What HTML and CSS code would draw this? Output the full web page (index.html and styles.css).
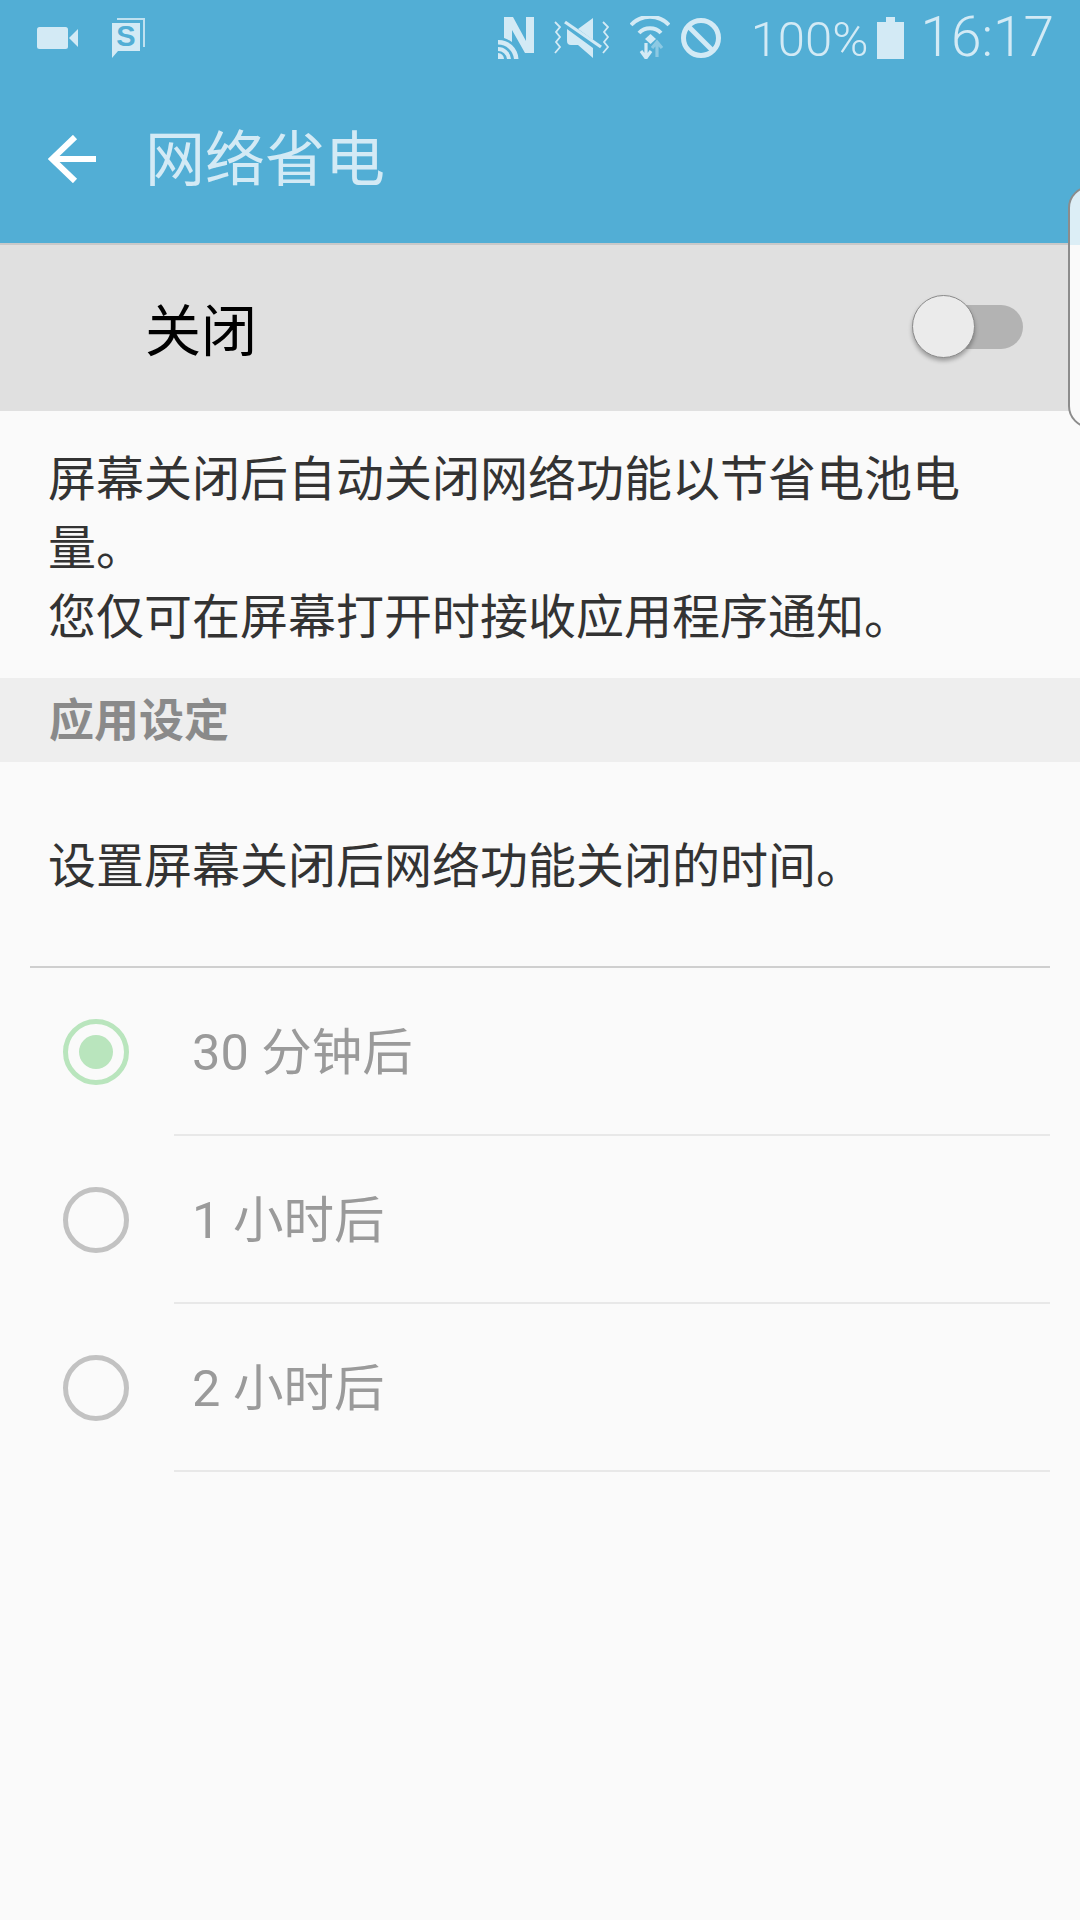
FILE: index.html
```html
<!DOCTYPE html>
<html lang="zh-CN">
<head>
    <meta charset="UTF-8">
    <meta name="viewport" content="width=device-width, initial-scale=1.0">
    <title>网络省电</title>
    <link rel="stylesheet" href="styles.css">
</head>
<body>
    <div class="screen">
        <header class="header">
            <div class="status">
                <div class="status-left">
                    <svg class="ic-video" viewBox="0 0 41 22"><rect x="0" y="0" width="31" height="22" rx="2.5"/><path d="M32 11 L41 2 V20 Z"/></svg>
                    <svg class="ic-s" viewBox="0 0 33 40">
                        <path d="M5 0 H33 V29 H31 V2 H5 Z" opacity=".85"/>
                        <path d="M0 5 H28 V33 H6 L0 40 Z"/>
                        <text x="14" y="28" class="ic-s-letter">S</text>
                    </svg>
                </div>
                <div class="status-right">
                    <svg class="ic-nfc" viewBox="0 0 36 42">
                        <path d="M6 0 H15 L28 24 V0 H36 V36 H27 L14 13 V25 A25 25 0 0 0 6 21 Z"/>
                        <path d="M0 23 A20 20 0 0 1 20.500 42 H16 A16 16 0 0 0 0 27.500 Z M0 30 A13 13 0 0 1 13 42 H9 A9 9 0 0 0 0 34 Z M0 36 A6 6 0 0 1 6 42 H0 Z"/>
                    </svg>
                    <svg class="ic-mute" viewBox="0 0 56 40">
                        <path d="M1 4 L6 9 L2 14 L6 19 L2 24 L6 29 L1 35 M49 4 L54 9 L50 14 L54 19 L50 24 L54 29 L49 35" class="line-thin"/>
                        <path d="M39 0 V22 L24 11 Z M13 11 L39 30 V40 L24 27 H17 Q13 27 13 23 Z"/>
                        <path d="M11 4 L47 29" class="line-mid"/>
                    </svg>
                    <svg class="ic-wifi" viewBox="0 0 40 43">
                        <path d="M1 9 A26 26 0 0 1 39 9" class="line-wide"/>
                        <path d="M9 17 A15 15 0 0 1 31 17" class="line-wide"/>
                        <path d="M15 23 L20.500 18 L26 23 L20.500 28 Z"/>
                        <path d="M16 27 V39 M11 35 L16 42 L21 35" class="line-mid"/>
                        <path d="M27 41 V27 M22 32 L27 26 L32 32" class="line-mid faded"/>
                    </svg>
                    <svg class="ic-block" viewBox="0 0 40 40"><circle cx="20" cy="20" r="17.500" class="line-bold"/><path d="M7 8 L32 33" class="line-bold"/></svg>
                    <span class="pct">100%</span>
                    <svg class="ic-batt" viewBox="0 0 27 42"><path d="M9 0 H18 V5 H27 V42 H0 V5 H9 Z"/></svg>
                    <span class="clock">16:17</span>
                </div>
            </div>
            <div class="toolbar">
                <svg class="ic-back" viewBox="0 0 48 48"><path d="M48 24 H4 M27 2 L4 24 L27 46"/></svg>
                <h1 class="title">网络省电</h1>
            </div>
        </header>

        <div class="switch-bar">
            <span class="switch-label">关闭</span>
            <div class="switch">
                <div class="switch-track"></div>
                <div class="switch-knob"></div>
            </div>
        </div>

        <p class="desc">屏幕关闭后自动关闭网络功能以节省电池电量。<br>您仅可在屏幕打开时接收应用程序通知。</p>

        <div class="section">应用设定</div>

        <p class="hint">设置屏幕关闭后网络功能关闭的时间。</p>

        <div class="options">
            <div class="option">
                <span class="radio checked"></span>
                <div class="option-text">30 分钟后</div>
            </div>
            <div class="option">
                <span class="radio"></span>
                <div class="option-text">1 小时后</div>
            </div>
            <div class="option">
                <span class="radio"></span>
                <div class="option-text">2 小时后</div>
            </div>
        </div>

        <div class="edge-handle"></div>
    </div>
</body>
</html>
```

FILE: styles.css
```css
* {
    box-sizing: border-box;
}
html, body {
    margin: 0;
    padding: 0;
}
body {
    font-family: Roboto, "Noto Sans CJK SC", sans-serif;
    background: #fafafa;
}
.screen {
    position: relative;
    width: 1080px;
    height: 1920px;
    overflow: hidden;
    background: #fafafa;
}

/* header */
.header {
    height: 243px;
    background: #52aed5;
    color: #d3eaf5;
}
.status {
    height: 75px;
    display: flex;
    justify-content: space-between;
    align-items: center;
    padding: 0 26px 0 37px;
}
.status svg {
    fill: #d3eaf5;
    display: block;
}
.status-left {
    display: flex;
    align-items: center;
    gap: 34px;
}
.status-right {
    display: flex;
    align-items: center;
}
.ic-video {
    width: 41px;
    height: 22px;
}
.ic-s {
    width: 33px;
    height: 40px;
}
.ic-s-letter {
    fill: #52aed5;
    font-family: "Liberation Sans", sans-serif;
    font-weight: bold;
    font-size: 29px;
    text-anchor: middle;
}
.ic-nfc {
    width: 36px;
    height: 42px;
}
.ic-mute {
    width: 56px;
    height: 40px;
    margin-left: 20px;
}
.ic-wifi {
    width: 40px;
    height: 43px;
    margin-left: 20px;
}
.ic-block {
    width: 40px;
    height: 40px;
    margin-left: 11px;
}
.status .line-thin, .status .line-mid, .status .line-wide, .status .line-bold {
    fill: none;
    stroke: #d3eaf5;
}
.status .line-thin {
    stroke-width: 1.8;
}
.status .line-mid {
    stroke-width: 3.2;
}
.status .line-wide {
    stroke-width: 4;
}
.status .line-bold {
    stroke-width: 5;
}
.status .faded {
    opacity: .45;
}
.pct {
    margin-left: 30px;
    margin-top: 3px;
    font-size: 49px;
    font-weight: 300;
    line-height: 75px;
}
.ic-batt {
    width: 27px;
    height: 42px;
    margin-left: 9px;
}
.clock {
    margin-left: 16px;
    font-size: 55px;
    font-weight: 300;
    line-height: 75px;
}
.toolbar {
    height: 168px;
    display: flex;
    align-items: center;
    padding-left: 48px;
}
.ic-back {
    width: 48px;
    height: 48px;
}
.ic-back path {
    fill: none;
    stroke: #fff;
    stroke-width: 6;
}
.title {
    margin: 4px 0 0 49px;
    font-size: 60px;
    font-weight: 400;
    line-height: 80px;
}

/* master switch */
.switch-bar {
    height: 168px;
    background: #e0e0e0;
    border-top: 2px solid #c9c9c9;
    display: flex;
    justify-content: space-between;
    align-items: center;
    padding: 0 57px 0 145px;
}
.switch-label {
    font-size: 56px;
    color: #000;
    margin-bottom: 4px;
}
.switch {
    position: relative;
    width: 111px;
    height: 62px;
    margin-bottom: 4px;
}
.switch-track {
    position: absolute;
    left: 20px;
    top: 10px;
    width: 91px;
    height: 44px;
    border-radius: 22px;
    background: #b3b3b3;
}
.switch-knob {
    position: absolute;
    left: 0;
    top: 0;
    width: 63px;
    height: 63px;
    border-radius: 50%;
    background: #ebebeb;
    border: 1px solid #8a8a8a;
    box-shadow: 0 3px 4px rgba(0, 0, 0, .3);
}

/* text */
.desc {
    margin: 0;
    height: 267px;
    padding: 34px 100px 0 48px;
    font-size: 48px;
    line-height: 69px;
    color: #333;
}
.section {
    height: 84px;
    background: #eeeeee;
    padding-left: 49px;
    font-size: 45px;
    font-weight: 700;
    line-height: 88px;
    color: #8a8a8a;
}
.hint {
    margin: 0;
    height: 204px;
    padding: 70px 0 0 48px;
    font-size: 48px;
    line-height: 69px;
    color: #333;
}

/* options */
.options {
    margin: 0 30px;
    border-top: 2px solid #cfcfcf;
}
.option {
    height: 168px;
    display: flex;
    align-items: center;
    padding-left: 33px;
}
.radio {
    flex: none;
    width: 66px;
    height: 66px;
    border-radius: 50%;
    border: 5px solid #c2c2c2;
    display: flex;
    align-items: center;
    justify-content: center;
}
.radio.checked {
    border-color: #b9e5bd;
}
.radio.checked::after {
    content: "";
    width: 34px;
    height: 34px;
    border-radius: 50%;
    background: #b9e5bd;
}
.option-text {
    align-self: stretch;
    flex: 1;
    margin-left: 45px;
    padding: 4px 0 0 18px;
    border-bottom: 2px solid #e8e8e8;
    font-size: 50.5px;
    line-height: 162px;
    color: #9a9a9a;
}

/* panel handle on the right edge */
.edge-handle {
    position: absolute;
    left: 1068px;
    top: 186px;
    width: 30px;
    height: 242px;
    border: 2px solid #8c8c8c;
    border-radius: 22px 0 0 22px;
    background: linear-gradient(#dceef6 0, #dceef6 57px, #fafafa 57px);
}
```
